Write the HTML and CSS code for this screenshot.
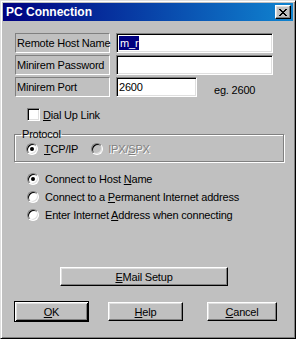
FILE: index.html
```html
<!DOCTYPE html>
<html>
<head>
<meta charset="utf-8">
<title>PC Connection</title>
<link rel="stylesheet" href="styles.css">
</head>
<body>
<div class="window">
  <div class="titlebar">
    <span class="title">PC Connection</span>
    <div class="close">
      <svg width="8" height="7" viewBox="0 0 8 7" shape-rendering="crispEdges">
        <path fill="#000" d="M0 0h2v1h-2z M6 0h2v1h-2z M1 1h2v1h-2z M5 1h2v1h-2z M2 2h4v1h-4z M3 3h2v1h-2z M2 4h4v1h-4z M1 5h2v1h-2z M5 5h2v1h-2z M0 6h2v1h-2z M6 6h2v1h-2z"/>
      </svg>
    </div>
  </div>
  <div class="content">
    <div class="fields">
      <div class="field-row">
        <div class="label">Remote Host Name</div>
        <div class="input wide"><span class="sel">m_r</span></div>
      </div>
      <div class="field-row">
        <div class="label">Minirem Password</div>
        <div class="input wide"></div>
      </div>
      <div class="field-row">
        <div class="label">Minirem Port</div>
        <div class="input narrow">2600</div>
        <div class="hint">eg. 2600</div>
      </div>
    </div>

    <div class="check-row">
      <span class="checkbox"></span>
      <span class="check-text"><u>D</u>ial Up Link</span>
    </div>

    <fieldset class="group">
      <legend>Protocol</legend>
      <div class="proto-row">
        <span class="radio checked"></span>
        <span class="radio-text"><u>T</u>CP/IP</span>
        <span class="radio disabled"></span>
        <span class="radio-text dim">IPX/<u>S</u>PX</span>
      </div>
    </fieldset>

    <div class="options">
      <div class="opt-row">
        <span class="radio checked"></span>
        <span class="radio-text">Connect to Host <u>N</u>ame</span>
      </div>
      <div class="opt-row">
        <span class="radio"></span>
        <span class="radio-text">Connect to a <u>P</u>ermanent Internet address</span>
      </div>
      <div class="opt-row">
        <span class="radio"></span>
        <span class="radio-text">Enter Internet <u>A</u>ddress when connecting</span>
      </div>
    </div>

    <div class="email-row">
      <div class="btn email"><span><u>E</u>Mail Setup</span></div>
    </div>

    <div class="button-row">
      <div class="btn default ok"><span><u>O</u>K</span></div>
      <div class="btn help"><span><u>H</u>elp</span></div>
      <div class="btn cancel"><span><u>C</u>ancel</span></div>
    </div>
  </div>
</div>
</body>
</html>
```

FILE: styles.css
```css
html, body {
  margin: 0;
  padding: 0;
  background: #c0c0c0;
}
body {
  font-family: "Liberation Sans", Arial, sans-serif;
  font-size: 11px;
  letter-spacing: -0.2px;
  color: #000;
}
u {
  text-decoration: underline;
  text-underline-offset: 1px;
}

.window {
  box-sizing: border-box;
  width: 296px;
  height: 339px;
  background: #c0c0c0;
  border: 1px solid;
  border-color: #dfdfdf #000 #000 #dfdfdf;
  box-shadow: inset 1px 1px #fff, inset -1px -1px #808080;
  padding: 2px;
  display: flex;
  flex-direction: column;
}

.titlebar {
  height: 18px;
  flex: none;
  background: linear-gradient(to right, #000080, #1084d0);
  display: flex;
  align-items: center;
  justify-content: space-between;
  padding: 0 2px 0 3px;
}
.title {
  color: #fff;
  font-weight: bold;
  font-size: 12px;
  letter-spacing: 0;
}
.close {
  box-sizing: border-box;
  width: 16px;
  height: 14px;
  background: #c0c0c0;
  border: 1px solid;
  border-color: #fff #000 #000 #fff;
  box-shadow: inset -1px -1px #808080, inset 1px 1px #dfdfdf;
  display: flex;
  align-items: center;
  justify-content: center;
}
.close svg { display: block; }

.content {
  display: flex;
  flex-direction: column;
  padding-left: 12px;
}

.fields {
  margin-top: 12px;
  display: flex;
  flex-direction: column;
  gap: 2px;
}
.field-row {
  display: flex;
  height: 20px;
}
.label {
  box-sizing: border-box;
  width: 95px;
  height: 20px;
  border: 1px solid;
  border-color: #808080 #fff #fff #808080;
  padding-left: 1px;
  display: flex;
  align-items: center;
  white-space: nowrap;
}
.input {
  box-sizing: border-box;
  height: 20px;
  margin-left: 6px;
  background: #fff;
  border: 1px solid;
  border-color: #808080 #fff #fff #808080;
  box-shadow: inset 1px 1px #000, inset -1px -1px #dfdfdf;
  padding-left: 2px;
  display: flex;
  align-items: center;
}
.input.wide { width: 157px; }
.input.narrow { width: 81px; }
.sel {
  background: #000080;
  color: #fff;
  line-height: 14px;
  padding: 0 1px;
}
.hint {
  margin-left: 17px;
  padding-top: 6px;
  display: flex;
  align-items: center;
}

.check-row {
  margin-top: 11px;
  margin-left: 12px;
  display: flex;
  align-items: center;
  height: 13px;
}
.checkbox {
  box-sizing: border-box;
  width: 13px;
  height: 13px;
  background: #fff;
  border: 1px solid;
  border-color: #808080 #fff #fff #808080;
  box-shadow: inset 1px 1px #000, inset -1px -1px #dfdfdf;
}
.check-text { margin-left: 3px; }

.group {
  box-sizing: border-box;
  margin: 7px 0 0 -1px;
  width: 270px;
  border: 1px solid #808080;
  box-shadow: inset 1px 1px #fff, 1px 1px #fff;
  padding: 2px 0 6px 11px;
}
.group legend {
  padding: 0 1px;
  margin-left: -5px;
  line-height: 13px;
}
.proto-row {
  display: flex;
  align-items: center;
  height: 12px;
}

.radio {
  box-sizing: border-box;
  width: 12px;
  height: 12px;
  flex: none;
  border-radius: 50%;
  background: #fff;
  border: 1px solid;
  border-color: #808080 #fff #fff #808080;
  box-shadow: inset 1px 1px #000, inset -1px -1px #dfdfdf;
  display: flex;
  align-items: center;
  justify-content: center;
}
.radio.checked::after {
  content: "";
  width: 4px;
  height: 4px;
  border-radius: 50%;
  background: #000;
}
.radio.disabled { background: #c0c0c0; }
.radio-text { margin-left: 6px; }
.proto-row .radio.disabled { margin-left: 13px; }
.proto-row .dim { margin-left: 5px; }
.dim {
  color: #808080;
  text-shadow: 1px 1px #fff;
}

.options {
  margin-top: 8px;
  margin-left: 12px;
  display: flex;
  flex-direction: column;
}
.opt-row {
  height: 18px;
  display: flex;
  align-items: center;
}

.btn {
  box-sizing: border-box;
  height: 19px;
  background: #c0c0c0;
  border: 1px solid;
  border-color: #fff #000 #000 #fff;
  box-shadow: inset -1px -1px #808080, inset 1px 1px #dfdfdf;
  display: flex;
  align-items: center;
  justify-content: center;
}
.email-row {
  margin-top: 43px;
  display: flex;
  padding-left: 45px;
}
.btn.email { width: 168px; }

.button-row {
  margin-top: 15px;
  display: flex;
  align-items: flex-start;
  margin-left: -1px;
}
.btn.default {
  height: 21px;
  border-color: #000;
  box-shadow: inset 1px 1px #fff, inset -1px -1px #000, inset 2px 2px #dfdfdf, inset -2px -2px #808080;
}
.btn.ok { width: 75px; }
.btn.help { width: 75px; margin-left: 19px; margin-top: 1px; }
.btn.cancel { width: 70px; margin-left: 24px; margin-top: 1px; }
```
